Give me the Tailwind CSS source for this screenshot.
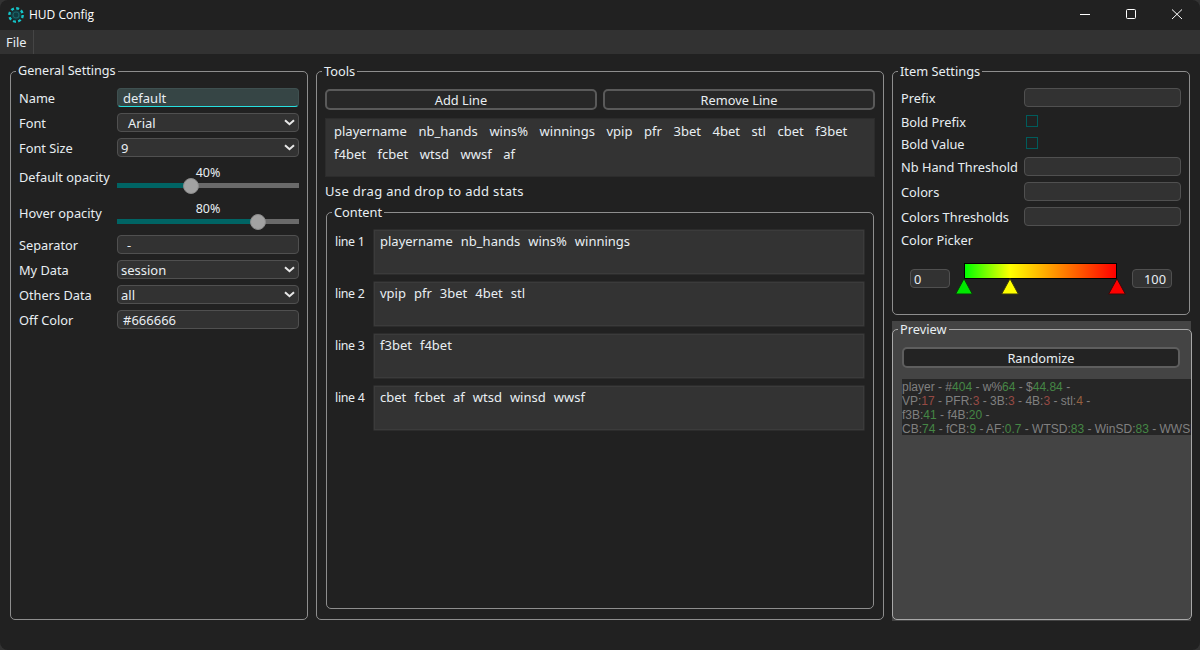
<!DOCTYPE html>
<html lang="en">
<head>
<meta charset="UTF-8">
<title>HUD Config</title>
<script src="https://cdn.jsdelivr.net/npm/@tailwindcss/browser@4"></script>
</head>
<body class="bg-[#333333]">
<div class="w-[1200px] h-[650px] overflow-hidden rounded-lg bg-[#212121] text-[#e8eef2] text-[12.8px] leading-4 font-['Noto_Sans',sans-serif]">

  <!-- title bar -->
  <div class="h-[30px] flex items-center">
    <svg class="ml-[8px] w-[16px] h-[16px]" viewBox="0 0 16 16">
      <circle cx="8" cy="8" r="5" fill="#123c40"/>
      <circle cx="8" cy="8" r="6.7" fill="none" stroke="#14c4c8" stroke-width="2.4" stroke-dasharray="3 2.26"/>
      <circle cx="8" cy="8" r="3" fill="none" stroke="#1a6468" stroke-width="1.2"/>
    </svg>
    <span class="ml-[5px] text-[12px] text-white font-['Open_Sans',sans-serif]">HUD Config</span>
    <div class="ml-auto flex items-center">
      <svg class="w-[46px] h-[30px]" viewBox="0 0 46 30"><path d="M18 14.5h10" stroke="#fff" stroke-width="1"/></svg>
      <svg class="w-[46px] h-[30px]" viewBox="0 0 46 30"><rect x="18.5" y="9.5" width="9" height="9" rx="1" fill="none" stroke="#fff"/></svg>
      <svg class="w-[46px] h-[30px]" viewBox="0 0 46 30"><path d="M18 9.5l10 9.5M28 9.5l-10 9.5" stroke="#fff" stroke-width="1"/></svg>
    </div>
  </div>

  <!-- menu bar -->
  <div class="h-[24px] bg-[#323232] flex">
    <div class="w-[34px] pl-[6px] flex items-center border-r border-[#454545]">File</div>
  </div>

  <div class="flex gap-[8px] px-[10px] pt-[9px]">

    <!-- general settings -->
    <fieldset class="w-[298px] h-[557px] border border-[#8e8e8e] rounded-[5px] pl-[8px] pr-[8px] pt-[9px]">
      <legend class="ml-[-3px] px-[2px] text-[12.6px]">General Settings</legend>
      <div class="flex flex-col">
        <div class="h-[19px] mb-[6px] flex items-center">
          <span class="w-[98px]">Name</span>
          <div class="w-[182px] h-[19px] px-[5px] flex items-center rounded-[4px] bg-[#364545] border border-[#3f5050] border-b-[#27e0e0] text-[13px]">default</div>
        </div>
        <div class="h-[19px] mb-[6px] flex items-center">
          <span class="w-[98px]">Font</span>
          <div class="w-[182px] h-[19px] pl-[10px] pr-[3px] flex items-center justify-between rounded-[4px] bg-[#323232] border border-[#505050] text-[13px]">Arial
            <svg class="w-[11px] h-[7px]" viewBox="0 0 11 7"><path d="M1 1.2l4.5 4 4.5-4" fill="none" stroke="#e8e8e8" stroke-width="2"/></svg>
          </div>
        </div>
        <div class="h-[19px] mb-[2px] flex items-center">
          <span class="w-[98px]">Font Size</span>
          <div class="w-[182px] h-[19px] pl-[3px] pr-[3px] flex items-center justify-between rounded-[4px] bg-[#323232] border border-[#505050] text-[13px]">9
            <svg class="w-[11px] h-[7px]" viewBox="0 0 11 7"><path d="M1 1.2l4.5 4 4.5-4" fill="none" stroke="#e8e8e8" stroke-width="2"/></svg>
          </div>
        </div>

        <div class="h-[36px] flex items-center">
          <span class="w-[98px] mt-[-1px]">Default opacity</span>
          <div class="w-[182px] flex flex-col items-center">
            <span class="h-[15px] text-[12.5px] leading-[15px] mt-[-1px]">40%</span>
            <div class="relative w-full h-[5px] mt-[3px] flex bg-[#6a6a6a]">
              <div class="w-[74px] bg-[#006464]"></div>
              <div class="absolute left-[66px] top-[-5px] w-[16px] h-[16px] rounded-full bg-[#a2a2a2] border border-[#8a8a8a]"></div>
            </div>
          </div>
        </div>
        <div class="h-[36px] flex items-center">
          <span class="w-[98px] mt-[-1px]">Hover opacity</span>
          <div class="w-[182px] flex flex-col items-center">
            <span class="h-[15px] text-[12.5px] leading-[15px] mt-[-1px]">80%</span>
            <div class="relative w-full h-[5px] mt-[3px] flex bg-[#6a6a6a]">
              <div class="w-[141px] bg-[#006464]"></div>
              <div class="absolute left-[133px] top-[-5px] w-[16px] h-[16px] rounded-full bg-[#a2a2a2] border border-[#8a8a8a]"></div>
            </div>
          </div>
        </div>

        <div class="h-[19px] mb-[6px] mt-[4px] flex items-center">
          <span class="w-[98px]">Separator</span>
          <div class="w-[182px] h-[19px] px-[9px] flex items-center rounded-[4px] bg-[#323232] border border-[#505050]">-</div>
        </div>
        <div class="h-[19px] mb-[6px] flex items-center">
          <span class="w-[98px]">My Data</span>
          <div class="w-[182px] h-[19px] pl-[3px] pr-[3px] flex items-center justify-between rounded-[4px] bg-[#323232] border border-[#505050] text-[13px]">session
            <svg class="w-[11px] h-[7px]" viewBox="0 0 11 7"><path d="M1 1.2l4.5 4 4.5-4" fill="none" stroke="#e8e8e8" stroke-width="2"/></svg>
          </div>
        </div>
        <div class="h-[19px] mb-[6px] flex items-center">
          <span class="w-[98px]">Others Data</span>
          <div class="w-[182px] h-[19px] pl-[3px] pr-[3px] flex items-center justify-between rounded-[4px] bg-[#323232] border border-[#505050] text-[13px]">all
            <svg class="w-[11px] h-[7px]" viewBox="0 0 11 7"><path d="M1 1.2l4.5 4 4.5-4" fill="none" stroke="#e8e8e8" stroke-width="2"/></svg>
          </div>
        </div>
        <div class="h-[19px] flex items-center">
          <span class="w-[98px]">Off Color</span>
          <div class="w-[182px] h-[19px] px-[5px] flex items-center rounded-[4px] bg-[#323232] border border-[#505050] text-[13px]">#666666</div>
        </div>
      </div>
    </fieldset>

    <!-- tools -->
    <fieldset class="w-[568px] h-[557px] border border-[#8e8e8e] rounded-[5px] px-[8px] pt-[10px]">
      <legend class="ml-[-3px] px-[2px]">Tools</legend>
      <div class="flex gap-[6px]">
        <div class="w-[272px] h-[21px] flex items-center justify-center rounded-[5px] bg-[#282828] border-2 border-[#5a5a5a]">Add Line</div>
        <div class="w-[272px] h-[21px] flex items-center justify-center rounded-[5px] bg-[#282828] border-2 border-[#5a5a5a]">Remove Line</div>
      </div>
      <div class="w-[550px] h-[59px] mt-[8px] pl-[8px] pr-[9px] pt-[4px] flex flex-wrap content-start gap-x-[11.6px] bg-[#333333] border border-[#2c2c2c] text-[13px]">
        <span class="h-[23px]">playername</span><span class="h-[23px]">nb_hands</span><span class="h-[23px]">wins%</span><span class="h-[23px]">winnings</span><span class="h-[23px]">vpip</span><span class="h-[23px]">pfr</span><span class="h-[23px]">3bet</span><span class="h-[23px]">4bet</span><span class="h-[23px]">stl</span><span class="h-[23px]">cbet</span><span class="h-[23px]">f3bet</span><span class="h-[23px]">f4bet</span><span class="h-[23px]">fcbet</span><span class="h-[23px]">wtsd</span><span class="h-[23px]">wwsf</span><span class="h-[23px]">af</span>
      </div>
      <p class="mt-[6px] text-[13px] tracking-[0.33px]">Use drag and drop to add stats</p>

      <!-- content -->
      <fieldset class="w-[548px] h-[405px] mt-[5px] ml-[1px] border border-[#8e8e8e] rounded-[5px] pl-[8px] pr-[8px] pt-[9px]">
        <legend class="ml-[-3px] px-[2px]">Content</legend>
        <div class="flex flex-col gap-[6px] text-[13px]">
          <div class="flex">
            <span class="w-[38px] mt-[5px] text-[12.4px] tracking-tight">line 1</span>
            <div class="w-[492px] h-[46px] px-[6px] pt-[3px] flex gap-x-[8px] bg-[#333333] border border-[#2c2c2c] rounded-[1px] shadow-[inset_0_0_0_1px_#3b3b3b]"><span>playername</span><span>nb_hands</span><span>wins%</span><span>winnings</span></div>
          </div>
          <div class="flex">
            <span class="w-[38px] mt-[5px] text-[12.4px] tracking-tight">line 2</span>
            <div class="w-[492px] h-[46px] px-[6px] pt-[3px] flex gap-x-[8px] bg-[#333333] border border-[#2c2c2c] rounded-[1px] shadow-[inset_0_0_0_1px_#3b3b3b]"><span>vpip</span><span>pfr</span><span>3bet</span><span>4bet</span><span>stl</span></div>
          </div>
          <div class="flex">
            <span class="w-[38px] mt-[5px] text-[12.4px] tracking-tight">line 3</span>
            <div class="w-[492px] h-[46px] px-[6px] pt-[3px] flex gap-x-[8px] bg-[#333333] border border-[#2c2c2c] rounded-[1px] shadow-[inset_0_0_0_1px_#3b3b3b]"><span>f3bet</span><span>f4bet</span></div>
          </div>
          <div class="flex">
            <span class="w-[38px] mt-[5px] text-[12.4px] tracking-tight">line 4</span>
            <div class="w-[492px] h-[46px] px-[6px] pt-[3px] flex gap-x-[8px] bg-[#333333] border border-[#2c2c2c] rounded-[1px] shadow-[inset_0_0_0_1px_#3b3b3b]"><span>cbet</span><span>fcbet</span><span>af</span><span>wtsd</span><span>winsd</span><span>wwsf</span></div>
          </div>
        </div>
      </fieldset>
    </fieldset>

    <!-- right column -->
    <div class="w-[298px] flex flex-col">
      <fieldset class="h-[252px] border border-[#8e8e8e] rounded-[5px] pl-[8px] pr-[8px] pt-[9px]">
        <legend class="ml-[-3px] px-[2px]">Item Settings</legend>
        <div class="h-[19px] flex items-center">
          <span class="w-[123px]">Prefix</span>
          <div class="w-[157px] h-[19px] rounded-[4px] bg-[#323232] border border-[#505050]"></div>
        </div>
        <div class="h-[22px] mt-[3px] flex items-center">
          <span class="w-[125px] mt-[1px]">Bold Prefix</span>
          <div class="w-[12px] h-[12px] border border-[#005c5c]"></div>
        </div>
        <div class="h-[22px] flex items-center">
          <span class="w-[125px] mt-[1px]">Bold Value</span>
          <div class="w-[12px] h-[12px] border border-[#005c5c]"></div>
        </div>
        <div class="h-[19px] mt-[3px] flex items-center">
          <span class="w-[123px]">Nb Hand Threshold</span>
          <div class="w-[157px] h-[19px] rounded-[4px] bg-[#323232] border border-[#505050]"></div>
        </div>
        <div class="h-[19px] mt-[6px] flex items-center">
          <span class="w-[123px]">Colors</span>
          <div class="w-[157px] h-[19px] rounded-[4px] bg-[#323232] border border-[#505050]"></div>
        </div>
        <div class="h-[19px] mt-[6px] flex items-center">
          <span class="w-[123px]">Colors Thresholds</span>
          <div class="w-[157px] h-[19px] rounded-[4px] bg-[#323232] border border-[#505050]"></div>
        </div>
        <div class="h-[19px] mt-[4px] flex items-center">Color Picker</div>

        <!-- color picker -->
        <div class="flex items-start mt-[14px] pl-[9px]">
          <div class="w-[40px] h-[19px] mt-[6px] px-[3px] flex items-center rounded-[4px] bg-[#323232] border border-[#505050]">0</div>
          <div class="relative w-[153px] h-[16px] ml-[14px] border border-black bg-[linear-gradient(90deg,#00ff00_0%,#ffff00_30%,#ff0000_100%)]">
            <svg class="absolute left-[-10px] top-[14px] w-[18px] h-[17px]" viewBox="0 0 18 17"><path d="M9 .7L17.3 16H.7z" fill="#00e800" stroke="#0a3a0a"/></svg>
            <svg class="absolute left-[36px] top-[14px] w-[18px] h-[17px]" viewBox="0 0 18 17"><path d="M9 .7L17.3 16H.7z" fill="#ffff00" stroke="#3a3a0a"/></svg>
            <svg class="absolute left-[143px] top-[14px] w-[18px] h-[17px]" viewBox="0 0 18 17"><path d="M9 .7L17.3 16H.7z" fill="#ff0000" stroke="#3a0a0a"/></svg>
          </div>
          <div class="w-[40px] h-[19px] mt-[6px] ml-[15px] px-[5px] flex items-center justify-end rounded-[4px] bg-[#323232] border border-[#505050]">100</div>
        </div>
      </fieldset>

      <!-- preview -->
      <div class="h-[300px] mt-[6px] w-[299px] bg-[#444444]">
        <fieldset class="w-[298px] h-[299px] border border-[#a8a8a8] rounded-[5px] pl-[9px] pt-[10px]">
          <legend class="ml-[-4px] px-[2px]">Preview</legend>
          <div class="w-[278px] h-[21px] flex items-center justify-center rounded-[5px] bg-[#232323] border-2 border-[#5e5e5e]">Randomize</div>
          <div class="w-[289px] h-[56px] mt-[11px] pt-[1px] overflow-hidden whitespace-nowrap bg-[#262626] text-[#808080] text-[12px] leading-[14px] font-['Liberation_Sans',sans-serif]">
            <div>player - #<span class="text-[#458645]">404</span> - w%<span class="text-[#458645]">64</span> - $<span class="text-[#458645]">44.84</span> -</div>
            <div>VP:<span class="text-[#964a44]">17</span> - PFR:<span class="text-[#964a44]">3</span> - 3B:<span class="text-[#964a44]">3</span> - 4B:<span class="text-[#964a44]">3</span> - stl:<span class="text-[#96603f]">4</span> -</div>
            <div>f3B:<span class="text-[#458645]">41</span> - f4B:<span class="text-[#458645]">20</span> -</div>
            <div>CB:<span class="text-[#458645]">74</span> - fCB:<span class="text-[#458645]">9</span> - AF:<span class="text-[#458645]">0.7</span> - WTSD:<span class="text-[#458645]">83</span> - WinSD:<span class="text-[#458645]">83</span> - WWSF</div>
          </div>
        </fieldset>
      </div>
    </div>
  </div>
</div>
</body>
</html>
